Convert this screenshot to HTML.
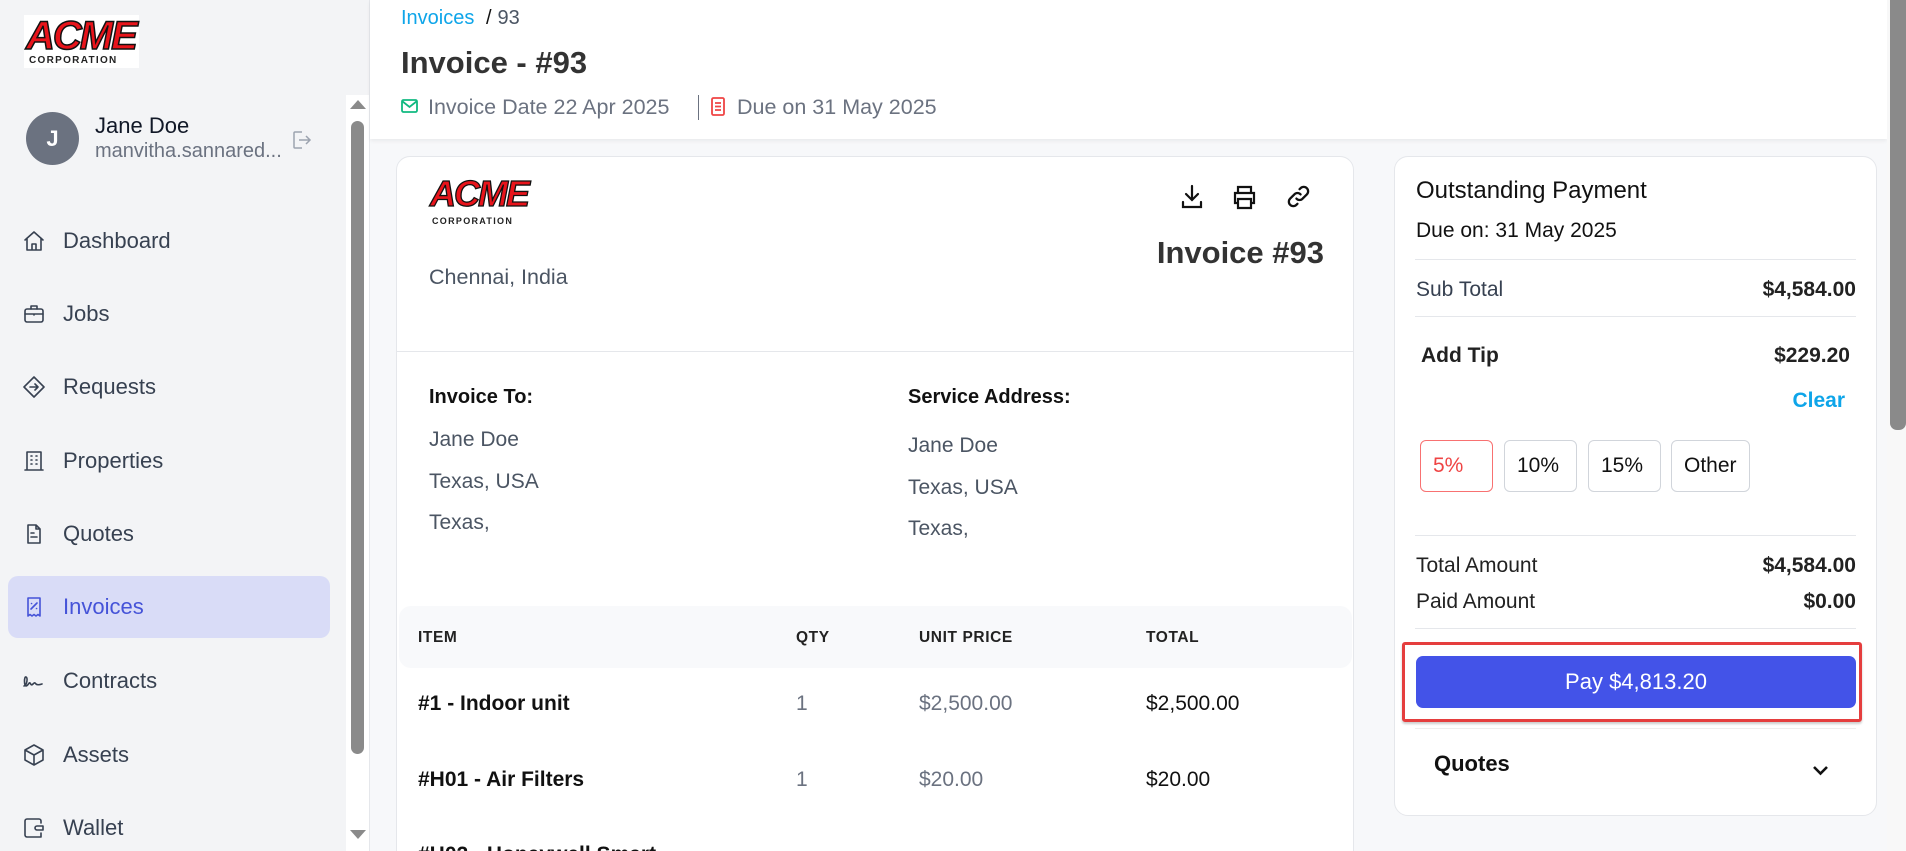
<!DOCTYPE html>
<html style="width:1906px;height:851px;overflow:hidden"><head><meta charset="utf-8"><style>
*{margin:0;padding:0;box-sizing:border-box}
body{width:1906px;height:851px;overflow:hidden;background:#f7f8fa;font-family:"Liberation Sans",sans-serif;position:relative;color:#111827}
.a{position:absolute;white-space:nowrap}
.side{position:absolute;left:0;top:0;width:370px;height:851px;background:#f3f4f6;border-right:1px solid #e5e7eb}
.nav{position:absolute;left:0;width:346px;height:62px;display:flex;align-items:center;font-size:22px;color:#374151}
.nav svg{position:absolute;left:22px;width:24px;height:24px;fill:none;stroke:#374151;stroke-width:1.6;stroke-linecap:round;stroke-linejoin:round}
.nav span{position:absolute;left:63px}
.card{position:absolute;background:#fff;border:1px solid #e5e7eb;border-radius:14px}
.hr{position:absolute;height:1px;background:#e5e7eb}
.tip{position:absolute;top:440px;height:52px;border:1px solid #d1d5db;border-radius:6px;font-size:21px;display:flex;align-items:center;padding-left:12px;color:#111}
</style></head><body>
<div class="side">
 <div class="a" style="left:24px;top:15px;width:115px;height:53px;background:#fff"></div>
 <div class="a" style="left:26px;top:15px;font:italic 900 40px/42px 'Liberation Sans',sans-serif;color:#e8141b;letter-spacing:-2px;-webkit-text-stroke:1.5px #111">ACME</div>
 <div class="a" style="left:29px;top:55px;font:900 10px/11px 'Liberation Sans',sans-serif;color:#222;letter-spacing:1.3px">CORPORATION</div>
 <div class="a" style="left:26px;top:112px;width:53px;height:53px;border-radius:50%;background:#6b7280;color:#fff;font-size:22px;font-weight:bold;text-align:center;line-height:53px">J</div>
 <div class="a" style="left:95px;top:113px;font-size:22px;color:#111827">Jane Doe</div>
 <div class="a" style="left:95px;top:140px;font-size:20px;color:#6b7280">manvitha.sannared...</div>
 <svg class="a" style="left:289px;top:128px" width="24" height="24" viewBox="0 0 24 24" fill="none" stroke="#9ca3af" stroke-width="1.5"><path d="M13 4H6a1 1 0 0 0-1 1v14a1 1 0 0 0 1 1h7M10 12h11M17 8l4 4-4 4"/></svg>
 <div class="nav" style="top:210px"><svg viewBox="0 0 24 24"><path d="M3 11l9-8 9 8M5 9v12h14V9M10 21v-6h4v6"/></svg><span>Dashboard</span></div>
 <div class="nav" style="top:283px"><svg viewBox="0 0 24 24"><rect x="3" y="7" width="18" height="13" rx="2"/><path d="M9 7V4h6v3M3 12h18M12 12v1"/></svg><span>Jobs</span></div>
 <div class="nav" style="top:356px"><svg viewBox="0 0 24 24"><path d="M12 2l10 10-10 10L2 12z M8 12h8M13 9l3 3-3 3"/></svg><span>Requests</span></div>
 <div class="nav" style="top:430px"><svg viewBox="0 0 24 24"><path d="M5 21V3h14v18M3 21h18M9 7h1M14 7h1M9 11h1M14 11h1M9 15h1M14 15h1"/></svg><span>Properties</span></div>
 <div class="nav" style="top:503px"><svg viewBox="0 0 24 24"><path d="M6 3h8l4 4v14H6z M9 11h3M9 15h6M14 3v4h4"/></svg><span>Quotes</span></div>
 <div class="a" style="left:8px;top:576px;width:322px;height:62px;background:#d9dcf7;border-radius:10px"></div>
 <div class="nav" style="top:576px;color:#4553d8"><svg viewBox="0 0 24 24" style="stroke:#4553d8"><path d="M6 3h12v18l-2-1.5-2 1.5-2-1.5-2 1.5-2-1.5-2 1.5z M9 14l6-6M9.5 8.5h.1M14.5 13.5h.1"/></svg><span>Invoices</span></div>
 <div class="nav" style="top:650px"><svg viewBox="0 0 24 24"><path d="M2 17c3-1 4-8 2-9s-2 9 0 9 3-4 4-3 1 3 3 1 2-1 3 0 3 1 6 0"/></svg><span>Contracts</span></div>
 <div class="nav" style="top:724px"><svg viewBox="0 0 24 24"><path d="M12 2l9 5v10l-9 5-9-5V7z M3 7l9 5 9-5M12 12v10"/></svg><span>Assets</span></div>
 <div class="nav" style="top:797px"><svg viewBox="0 0 24 24"><path d="M19 7V5a2 2 0 0 0-2-2H5a2 2 0 0 0-2 2v14a2 2 0 0 0 2 2h14v-4M21 10h-6a2 2 0 0 0 0 4h6z"/></svg><span>Wallet</span></div>
 <div class="a" style="left:346px;top:95px;width:23px;height:756px;background:#fff"></div>
 <div class="a" style="left:351px;top:121px;width:13px;height:633px;background:#8a8a8a;border-radius:7px"></div>
 <div class="a" style="left:350px;top:100px;width:0;height:0;border-left:8px solid transparent;border-right:8px solid transparent;border-bottom:9px solid #8a8a8a"></div>
 <div class="a" style="left:350px;top:830px;width:0;height:0;border-left:8px solid transparent;border-right:8px solid transparent;border-top:9px solid #8a8a8a"></div>
</div>
<!-- header -->
<div class="a" style="left:370px;top:0;width:1517px;height:139px;background:#fff;box-shadow:0 2px 4px rgba(0,0,0,.06)"></div>
<div class="a" style="left:401px;top:7px;font-size:20px;color:#0ea5e9">Invoices <span style="color:#111;margin:0 6px">/</span><span style="color:#4b5563">93</span></div>
<div class="a" style="left:401px;top:45px;font-size:31px;font-weight:bold;color:#333">Invoice - #93</div>
<svg class="a" style="left:401px;top:99px" width="17" height="14" viewBox="0 0 17 14" fill="none" stroke="#10b981" stroke-width="1.8"><rect x="1" y="1" width="15" height="12" rx="1.5"/><path d="M1 2l7.5 6L16 2"/></svg>
<div class="a" style="left:428px;top:95px;font-size:21.5px;color:#6b7280">Invoice Date 22 Apr 2025</div>
<div class="a" style="left:698px;top:95px;width:1px;height:25px;background:#6b7280"></div>
<svg class="a" style="left:711px;top:97px" width="14" height="19" viewBox="0 0 14 19" fill="none" stroke="#ef4444" stroke-width="1.8"><rect x="1" y="1" width="12" height="17" rx="1.5"/><path d="M4 6h6M4 9.5h6M4 13h6"/></svg>
<div class="a" style="left:737px;top:95px;font-size:21.5px;color:#6b7280">Due on 31 May 2025</div>
<!-- invoice card -->
<div class="card" style="left:396px;top:156px;width:958px;height:720px"></div>
<div class="a" style="left:430px;top:175px;font:italic 900 36px/37px 'Liberation Sans',sans-serif;color:#e8141b;letter-spacing:-2px;-webkit-text-stroke:1.3px #111">ACME</div>
<div class="a" style="left:432px;top:216px;font:900 9px/10px 'Liberation Sans',sans-serif;color:#222;letter-spacing:1.3px">CORPORATION</div>
<svg class="a" style="left:1180px;top:184px" width="24" height="26" viewBox="0 0 24 26" fill="none" stroke="#111" stroke-width="2.2" stroke-linecap="round"><path d="M12 2v14M6 10l6 6 6-6M3 18v5h18v-5"/></svg>
<svg class="a" style="left:1232px;top:184px" width="25" height="26" viewBox="0 0 25 26" fill="none" stroke="#111" stroke-width="2.2"><path d="M6 9V3h13v6M6 19H3V9h19v10h-3M6 15h13v9H6z"/></svg>
<svg class="a" style="left:1286px;top:184px" width="25" height="25" viewBox="0 0 24 24" fill="none" stroke="#111" stroke-width="2.2" stroke-linecap="round"><path d="M10 14a4 4 0 0 0 6 0l4-4a4 4 0 0 0-6-6l-1 1M14 10a4 4 0 0 0-6 0l-4 4a4 4 0 0 0 6 6l1-1"/></svg>
<div class="a" style="right:582px;top:235px;font-size:31px;font-weight:bold;color:#333">Invoice #93</div>
<div class="a" style="left:429px;top:265px;font-size:21.5px;color:#4b5563">Chennai, India</div>
<div class="hr" style="left:397px;top:351px;width:956px"></div>
<div class="a" style="left:429px;top:386px;font-size:20px;font-weight:bold;color:#111">Invoice To:</div>
<div class="a" style="left:429px;top:428px;font-size:21px;color:#4b5563">Jane Doe</div>
<div class="a" style="left:429px;top:470px;font-size:21px;color:#4b5563">Texas, USA</div>
<div class="a" style="left:429px;top:511px;font-size:21px;color:#4b5563">Texas,</div>
<div class="a" style="left:908px;top:386px;font-size:20px;font-weight:bold;color:#111">Service Address:</div>
<div class="a" style="left:908px;top:434px;font-size:21px;color:#4b5563">Jane Doe</div>
<div class="a" style="left:908px;top:476px;font-size:21px;color:#4b5563">Texas, USA</div>
<div class="a" style="left:908px;top:517px;font-size:21px;color:#4b5563">Texas,</div>
<div class="a" style="left:399px;top:606px;width:953px;height:62px;background:#f8f9fb;border-radius:12px"></div>
<div class="a" style="left:418px;top:629px;font-size:15.5px;font-weight:bold;color:#222;letter-spacing:.6px">ITEM</div>
<div class="a" style="left:796px;top:629px;font-size:15.5px;font-weight:bold;color:#222;letter-spacing:.6px">QTY</div>
<div class="a" style="left:919px;top:629px;font-size:15.5px;font-weight:bold;color:#222;letter-spacing:.6px">UNIT PRICE</div>
<div class="a" style="left:1146px;top:629px;font-size:15.5px;font-weight:bold;color:#222;letter-spacing:.6px">TOTAL</div>
<div class="a" style="left:418px;top:692px;font-size:21px;font-weight:bold;color:#111">#1 - Indoor unit</div>
<div class="a" style="left:796px;top:692px;font-size:21px;color:#6b7280">1</div>
<div class="a" style="left:919px;top:692px;font-size:21px;color:#6b7280">$2,500.00</div>
<div class="a" style="left:1146px;top:692px;font-size:21px;color:#111">$2,500.00</div>
<div class="a" style="left:418px;top:768px;font-size:21px;font-weight:bold;color:#111">#H01 - Air Filters</div>
<div class="a" style="left:796px;top:768px;font-size:21px;color:#6b7280">1</div>
<div class="a" style="left:919px;top:768px;font-size:21px;color:#6b7280">$20.00</div>
<div class="a" style="left:1146px;top:768px;font-size:21px;color:#111">$20.00</div>
<div class="a" style="left:418px;top:843px;font-size:21px;font-weight:bold;color:#111">#H02 - Honeywell Smart</div>
<!-- right card -->
<div class="card" style="left:1394px;top:156px;width:483px;height:660px"></div>
<div class="a" style="left:1416px;top:177px;font-size:24px;color:#111">Outstanding Payment</div>
<div class="a" style="left:1416px;top:219px;font-size:21px;color:#111">Due on: 31 May 2025</div>
<div class="hr" style="left:1415px;top:259px;width:441px"></div>
<div class="a" style="left:1416px;top:278px;font-size:21px;color:#374151">Sub Total</div>
<div class="a" style="right:50px;top:278px;font-size:21px;font-weight:bold;color:#222">$4,584.00</div>
<div class="hr" style="left:1415px;top:316px;width:441px"></div>
<div class="a" style="left:1421px;top:344px;font-size:21px;font-weight:bold;color:#222">Add Tip</div>
<div class="a" style="right:56px;top:344px;font-size:21px;font-weight:bold;color:#222">$229.20</div>
<div class="a" style="right:61px;top:389px;font-size:21px;font-weight:bold;color:#0ea5e9">Clear</div>
<div class="tip" style="left:1420px;width:73px;border-color:#f87171;color:#ef4444">5%</div>
<div class="tip" style="left:1504px;width:73px">10%</div>
<div class="tip" style="left:1588px;width:73px">15%</div>
<div class="tip" style="left:1671px;width:79px">Other</div>
<div class="hr" style="left:1415px;top:535px;width:441px"></div>
<div class="a" style="left:1416px;top:554px;font-size:21px;color:#222">Total Amount</div>
<div class="a" style="right:50px;top:554px;font-size:21px;font-weight:bold;color:#222">$4,584.00</div>
<div class="a" style="left:1416px;top:590px;font-size:21px;color:#222">Paid Amount</div>
<div class="a" style="right:50px;top:590px;font-size:21px;font-weight:bold;color:#222">$0.00</div>
<div class="hr" style="left:1415px;top:628px;width:441px"></div>
<div class="a" style="left:1402px;top:642px;width:460px;height:80px;border:3px solid #e53e3e;border-radius:3px;box-shadow:0 2px 2px rgba(0,0,0,.2)"></div>
<div class="a" style="left:1416px;top:656px;width:440px;height:52px;background:#4353e8;border-radius:7px;color:#fff;font-size:22px;text-align:center;line-height:52px">Pay $4,813.20</div>
<div class="hr" style="left:1415px;top:728px;width:441px;background:#eee"></div>
<div class="a" style="left:1434px;top:751px;font-size:22px;font-weight:bold;color:#111">Quotes</div>
<svg class="a" style="left:1812px;top:764px" width="17" height="12" viewBox="0 0 17 12" fill="none" stroke="#111" stroke-width="2.6"><path d="M2 3l6.5 6.5L15 3"/></svg>
<!-- right scrollbar -->
<div class="a" style="left:1887px;top:0;width:19px;height:851px;background:#f8f8f8"></div>
<div class="a" style="left:1890px;top:0;width:16px;height:430px;background:#8a8a8a;border-radius:0 0 7px 7px"></div>
</body></html>
